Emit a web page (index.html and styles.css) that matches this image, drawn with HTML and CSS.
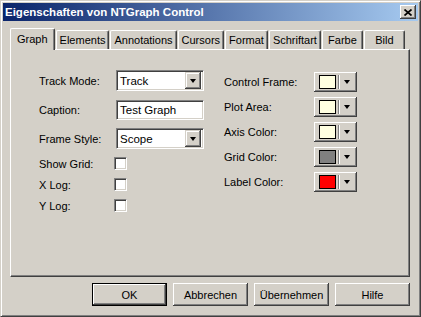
FILE: index.html
```html
<!DOCTYPE html>
<html lang="de">
<head>
<meta charset="utf-8">
<title>Eigenschaften von NTGraph Control</title>
<link rel="stylesheet" href="styles.css">
</head>
<body>
<div class="window">
  <div class="titlebar">
    <span class="title">Eigenschaften von NTGraph Control</span>
    <button class="close" type="button" aria-label="Schließen">
      <svg width="8" height="7" viewBox="0 0 8 7"><path d="M0.5 0.5L7.5 6.5M7.5 0.5L0.5 6.5" stroke="#000" stroke-width="1.7" fill="none"/></svg>
    </button>
  </div>
  <div class="tabs">
    <div class="tab active">Graph</div>
    <div class="tab">Elements</div>
    <div class="tab">Annotations</div>
    <div class="tab">Cursors</div>
    <div class="tab">Format</div>
    <div class="tab">Schriftart</div>
    <div class="tab">Farbe</div>
    <div class="tab">Bild</div>
  </div>
  <div class="panel">
    <div class="col-left">
      <div class="inputs">
        <label class="lbl">Track Mode:</label>
        <div class="combo"><span class="field-text">Track</span><span class="combo-btn"><i class="arrow"></i></span></div>
        <label class="lbl">Caption:</label>
        <div class="edit"><span class="field-text">Test Graph</span></div>
        <label class="lbl">Frame Style:</label>
        <div class="combo"><span class="field-text">Scope</span><span class="combo-btn"><i class="arrow"></i></span></div>
      </div>
      <div class="checks">
        <label class="lbl">Show Grid:</label><span class="checkbox"></span>
        <label class="lbl">X Log:</label><span class="checkbox"></span>
        <label class="lbl">Y Log:</label><span class="checkbox"></span>
      </div>
    </div>
    <div class="col-right">
      <label class="lbl">Control Frame:</label>
      <div class="colorbtn"><span class="swatch cream"></span><span class="sep"></span><i class="arrow"></i></div>
      <label class="lbl">Plot Area:</label>
      <div class="colorbtn"><span class="swatch cream"></span><span class="sep"></span><i class="arrow"></i></div>
      <label class="lbl">Axis Color:</label>
      <div class="colorbtn"><span class="swatch cream"></span><span class="sep"></span><i class="arrow"></i></div>
      <label class="lbl">Grid Color:</label>
      <div class="colorbtn"><span class="swatch gray"></span><span class="sep"></span><i class="arrow"></i></div>
      <label class="lbl">Label Color:</label>
      <div class="colorbtn"><span class="swatch red"></span><span class="sep"></span><i class="arrow"></i></div>
    </div>
  </div>
  <div class="buttons">
    <button class="btn default" type="button">OK</button>
    <button class="btn" type="button">Abbrechen</button>
    <button class="btn" type="button">Übernehmen</button>
    <button class="btn" type="button">Hilfe</button>
  </div>
</div>
</body>
</html>
```
FILE: styles.css
```css
* { box-sizing: border-box; }
html, body { margin: 0; padding: 0; }
body {
  background: #d4d0c8;
  font-family: "Liberation Sans", Arial, sans-serif;
  font-size: 11px;
  color: #000;
}
.window {
  width: 421px;
  height: 317px;
  background: #d4d0c8;
  border: 1px solid;
  border-color: #d4d0c8 #404040 #404040 #d4d0c8;
  box-shadow: inset 1px 1px #fff, inset -1px -1px #808080;
  padding: 2px;
  display: flex;
  flex-direction: column;
}
.titlebar {
  height: 18px;
  flex: none;
  display: flex;
  align-items: center;
  justify-content: space-between;
  background: linear-gradient(to right, #0a246a, #a6caf0);
  padding: 0 2px;
}
.title {
  color: #fff;
  font-weight: bold;
  font-size: 11.5px;
}
.close {
  width: 16px;
  height: 14px;
  padding: 0;
  border: 0;
  background: #d4d0c8;
  box-shadow: inset -1px -1px #404040, inset 1px 1px #fff, inset -2px -2px #808080;
  display: flex;
  align-items: center;
  justify-content: center;
}
.close svg { display: block; }

.tabs {
  flex: none;
  height: 22px;
  margin: 6px 0 0 7px;
  padding-left: 2px;
  display: flex;
  align-items: flex-end;
  position: relative;
  z-index: 1;
}
.tab {
  flex: none;
  height: 19px;
  min-width: 41px;
  padding: 0 3px;
  display: flex;
  align-items: center;
  justify-content: center;
  background: #d4d0c8;
  border-top: 1px solid #fff;
  border-left: 1px solid #fff;
  border-right: 1px solid #404040;
  box-shadow: inset -1px 0 #808080;
  border-radius: 2px 2px 0 0;
  margin-right: 1px;
}
.tab.active {
  height: 22px;
  margin: 0 1px -1px -2px;
  padding: 0 6px 2px;
}

.panel {
  flex: none;
  height: 228px;
  margin: 0 8px 0 7px;
  border: 1px solid;
  border-color: #fff #404040 #404040 #fff;
  box-shadow: inset -1px -1px #808080;
  padding: 20px 0 0 28px;
  display: flex;
}
.col-left { width: 185px; }
.inputs {
  display: grid;
  grid-template-columns: 77px 88px;
  grid-auto-rows: 21px;
  row-gap: 8px;
  align-items: center;
}
.checks {
  margin-top: 4px;
  display: grid;
  grid-template-columns: 75px 13px;
  grid-auto-rows: 21px;
  align-items: center;
}
.lbl { white-space: nowrap; }

.combo, .edit {
  height: 21px;
  background: #fff;
  border: 1px solid;
  border-color: #808080 #fff #fff #808080;
  box-shadow: inset 1px 1px #404040, inset -1px -1px #d4d0c8;
  display: flex;
  align-items: center;
  padding: 2px;
}
.edit { height: 20px; }
.field-text { flex: 1; padding-left: 1px; font-size: 11.5px; }
.combo-btn {
  width: 16px;
  height: 17px;
  background: #d4d0c8;
  box-shadow: inset -1px -1px #404040, inset 1px 1px #d4d0c8, inset -2px -2px #808080, inset 2px 2px #fff;
  display: flex;
  align-items: center;
  justify-content: center;
}
.arrow {
  display: block;
  width: 1px;
  height: 0;
  border-top: 4px solid #000;
  border-left: 3px solid transparent;
  border-right: 3px solid transparent;
}
.checkbox {
  width: 13px;
  height: 13px;
  background: #fff;
  border: 1px solid;
  border-color: #808080 #fff #fff #808080;
  box-shadow: inset 1px 1px #404040, inset -1px -1px #d4d0c8;
}

.col-right {
  padding-top: 2px;
  display: grid;
  grid-template-columns: 90px 43px;
  grid-auto-rows: 20px;
  row-gap: 5px;
  align-content: start;
  align-items: center;
}
.colorbtn {
  width: 43px;
  height: 20px;
  background: #d4d0c8;
  box-shadow: inset -1px -1px #404040, inset 1px 1px #fff, inset -2px -2px #808080;
  display: flex;
  align-items: center;
  padding: 0 0 0 5px;
}
.swatch {
  width: 17px;
  height: 14px;
  border: 1px solid #000;
}
.cream { background: #ffffe1; }
.gray { background: #808080; }
.red { background: #ff0000; }
.sep {
  width: 2px;
  height: 14px;
  margin: 0 4px 0 2px;
  border-left: 1px solid #808080;
  border-right: 1px solid #fff;
}

.buttons {
  flex: none;
  margin: 6px 8px 0 0;
  display: flex;
  justify-content: flex-end;
  gap: 6px;
}
.btn {
  width: 75px;
  height: 23px;
  padding: 0;
  border: 0;
  background: #d4d0c8;
  font-family: "Liberation Sans", Arial, sans-serif;
  font-size: 11px;
  color: #000;
  box-shadow: inset -1px -1px #404040, inset 1px 1px #fff, inset -2px -2px #808080;
}
.btn.default {
  box-shadow: inset 0 0 0 1px #000, inset -2px -2px #404040, inset 2px 2px #fff, inset -3px -3px #808080;
}
```
